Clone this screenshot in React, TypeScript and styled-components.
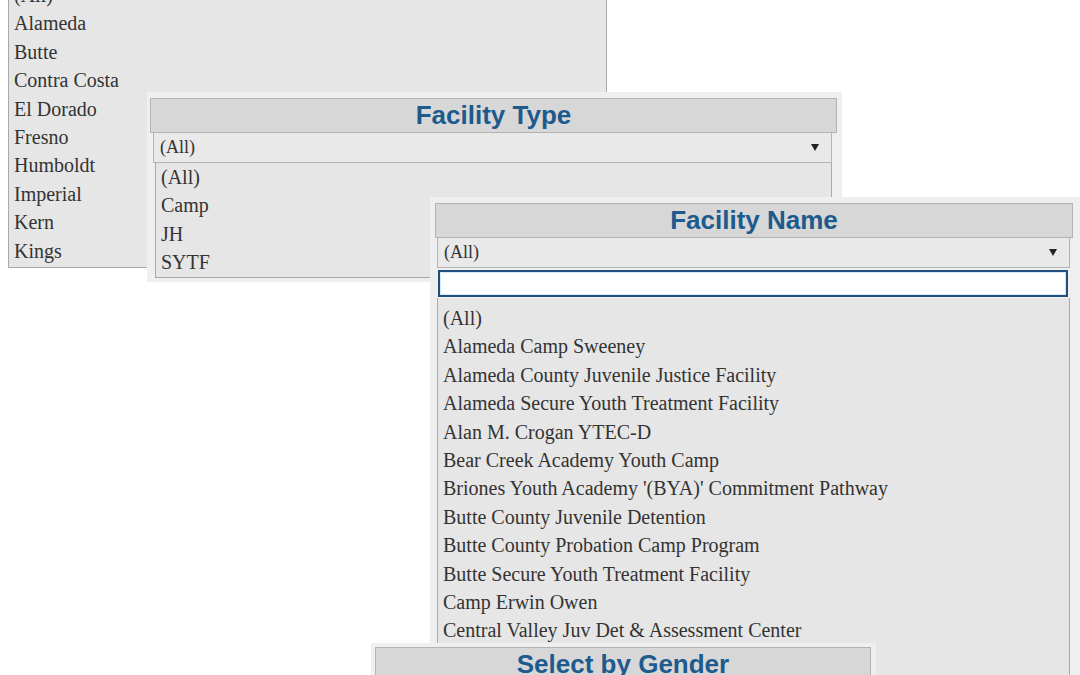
import styled, { createGlobalStyle } from "styled-components";

const GlobalStyle = createGlobalStyle`
  html, body {
    margin: 0;
    padding: 0;
    background: #ffffff;
  }
`;

// the picture is a collage of dropdown screenshots laid over each other
const Canvas = styled.div`
  position: relative;
  width: 1080px;
  height: 675px;
  overflow: hidden;
  background: #ffffff;
`;

const Panel = styled.section<{ $x: number; $y: number; $w: number; $h: number; $pad: string; $bare?: boolean }>`
  position: absolute;
  left: ${(p) => p.$x}px;
  top: ${(p) => p.$y}px;
  width: ${(p) => p.$w}px;
  height: ${(p) => p.$h}px;
  box-sizing: border-box;
  padding: ${(p) => p.$pad};
  background: ${(p) => (p.$bare ? "transparent" : "#efefef")};
  display: flex;
  flex-direction: column;
  overflow: hidden;
`;

const Header = styled.header`
  flex: none;
  height: 35px;
  box-sizing: border-box;
  display: flex;
  align-items: center;
  justify-content: center;
  padding-bottom: 2px;
  background: #d7d7d7;
  border: 1px solid #b3b3b3;
`;

const Title = styled.h2`
  margin: 0;
  font-family: "Liberation Sans", Arial, sans-serif;
  font-weight: 700;
  font-size: 26px;
  line-height: 1;
  color: #1d5a8e;
`;

const Body = styled.div<{ $inset: string }>`
  flex: 1;
  min-height: 0;
  display: flex;
  flex-direction: column;
  padding: ${(p) => p.$inset};
`;

const SelectBox = styled.div`
  flex: none;
  height: 30px;
  box-sizing: border-box;
  display: flex;
  align-items: center;
  justify-content: space-between;
  padding: 0 12px 0 6px;
  background: #e9e9e9;
  border: 1px solid #b4b4b4;
  border-top: none;
  font-family: "Liberation Serif", "Times New Roman", serif;
  font-size: 18px;
  color: #333333;
`;

const Arrow = styled.span`
  width: 0;
  height: 0;
  border-left: 4.5px solid transparent;
  border-right: 4.5px solid transparent;
  border-top: 7px solid #222222;
`;

const SearchInput = styled.input`
  flex: none;
  height: 27px;
  margin: 2px 2px 1px 1px;
  box-sizing: border-box;
  border: 2px solid #1f4f7c;
  background: #ffffff;
  box-shadow: inset 0 0 0 1px #d6e8f6;
  outline: none;
`;

const OptionList = styled.ul<{ $top: number; $shift: number }>`
  flex: 1;
  margin: 0 0 0 ${(p) => p.$shift}px;
  padding: ${(p) => p.$top}px 0 0;
  list-style: none;
  background: #e6e6e6;
  border-left: 1px solid #a9a9a9;
  border-right: 1px solid #a9a9a9;
  border-bottom: 1px solid #a9a9a9;
`;

const Option = styled.li`
  padding-left: 5px;
  font-family: "Liberation Serif", "Times New Roman", serif;
  font-size: 20px;
  line-height: 28.4px;
  color: #333333;
  white-space: nowrap;
`;

const counties = ["(All)", "Alameda", "Butte", "Contra Costa", "El Dorado", "Fresno", "Humboldt", "Imperial", "Kern", "Kings"];

const facilityTypes = ["(All)", "Camp", "JH", "SYTF"];

const facilityNames = [
  "(All)",
  "Alameda Camp Sweeney",
  "Alameda County Juvenile Justice Facility",
  "Alameda Secure Youth Treatment Facility",
  "Alan M. Crogan YTEC-D",
  "Bear Creek Academy Youth Camp",
  "Briones Youth Academy '(BYA)' Commitment Pathway",
  "Butte County Juvenile Detention",
  "Butte County Probation Camp Program",
  "Butte Secure Youth Treatment Facility",
  "Camp Erwin Owen",
  "Central Valley Juv Det & Assessment Center",
];

export default function App() {
  return (
    <>
      <GlobalStyle />
      <Canvas>
        <Panel $x={8} $y={-19} $w={599} $h={287} $pad="0" $bare>
          <OptionList $top={0} $shift={0}>
            {counties.map((c) => (
              <Option key={c}>{c}</Option>
            ))}
          </OptionList>
        </Panel>

        <Panel $x={147} $y={92} $w={695} $h={190} $pad="6px 5px 5px 3px">
          <Header>
            <Title>Facility Type</Title>
          </Header>
          <Body $inset="0 5px 0 3px">
            <SelectBox>
              (All)
              <Arrow />
            </SelectBox>
            <OptionList $top={0} $shift={2}>
              {facilityTypes.map((t) => (
                <Option key={t}>{t}</Option>
              ))}
            </OptionList>
          </Body>
        </Panel>

        <Panel $x={430} $y={197} $w={650} $h={490} $pad="6px 7px 0 5px">
          <Header>
            <Title>Facility Name</Title>
          </Header>
          <Body $inset="0 3px 0 2px">
            <SelectBox>
              (All)
              <Arrow />
            </SelectBox>
            <SearchInput type="text" />
            <OptionList $top={6} $shift={0}>
              {facilityNames.map((n) => (
                <Option key={n}>{n}</Option>
              ))}
            </OptionList>
          </Body>
        </Panel>

        <Panel $x={371} $y={643} $w={505} $h={60} $pad="4px 5px 0 4px">
          <Header>
            <Title>Select by Gender</Title>
          </Header>
        </Panel>
      </Canvas>
    </>
  );
}
